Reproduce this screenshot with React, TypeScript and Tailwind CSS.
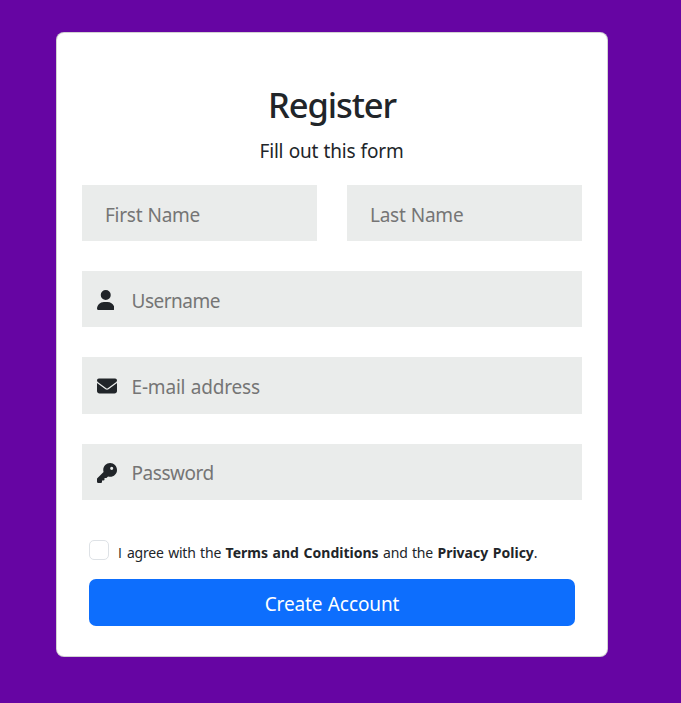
import React from "react";
import { FaUser, FaEnvelope, FaKey } from "react-icons/fa6";

type FieldProps = {
  placeholder: string;
  type?: string;
  icon?: React.ReactNode;
  className: string;
  textClass: string;
};

function Field({ placeholder, type = "text", icon, className, textClass }: FieldProps) {
  return (
    <label className={`flex items-center bg-[#eaeceb] ${className}`}>
      {icon && <span className="ml-[14.5px] flex w-[35px] shrink-0">{icon}</span>}
      <input
        type={type}
        placeholder={placeholder}
        className={`h-full w-full min-w-0 bg-transparent text-[19px] outline-none placeholder:text-[#757575] ${textClass}`}
      />
    </label>
  );
}

export default function App() {
  return (
    <main className="min-h-screen bg-[#6605a3] pt-8 pl-14 font-['Noto_Sans','Open_Sans',sans-serif] text-[#212529]">
      <form className="flex h-[625px] w-[552px] flex-col rounded-[8px] border border-black/[0.176] bg-white px-[25px] pt-[50px]">
        <h1 className="flex h-[44px] items-center justify-center text-[34.5px] font-medium whitespace-nowrap">
          <span className="tracking-[-1.1px]">Register</span>
        </h1>
        <p className="mt-[9px] flex h-[30px] items-center justify-center pr-px text-[19px]">
          <span className="tracking-[-0.2px] [word-spacing:0.6px]">Fill out this form</span>
        </p>
        <div className="mt-[19px] flex gap-[30px]">
          <Field placeholder="First Name" className="h-14 w-[235px] pl-[23px]" textClass="pt-[3px] tracking-[-0.25px] [word-spacing:0.5px]" />
          <Field placeholder="Last Name" className="h-14 w-[235px] pl-[23px]" textClass="pt-[3px] tracking-[-0.25px] [word-spacing:0.5px]" />
        </div>
        <Field placeholder="Username" icon={<FaUser className="mt-[2.5px] h-5 w-[17.5px]" />} className="mt-[30px] h-14" textClass="pt-[3px] tracking-[-0.5px]" />
        <Field placeholder="E-mail address" type="email" icon={<FaEnvelope className="mt-[1.5px] size-5" />} className="mt-[30px] h-[57px]" textClass="pt-[3px] tracking-[-0.18px] [word-spacing:0.6px]" />
        <Field placeholder="Password" type="password" icon={<FaKey className="mt-[1px] size-5" />} className="mt-[30px] h-14" textClass="pt-[1px] tracking-[-0.45px]" />
        <div className="mt-10 ml-[7px] flex h-[25px] items-start">
          <input
            type="checkbox"
            aria-label="Agree with the terms"
            className="size-5 shrink-0 appearance-none rounded-[5px] border border-[#dee2e6] bg-white"
          />
          <span className="ml-[9px] pt-[2px] text-[14px] leading-[21px] tracking-[-0.2px] whitespace-nowrap [word-spacing:1px]">
            <span className="mr-[0.8px] font-['Open_Sans']">I</span> agree with the <b className="tracking-[0px]">Terms and Conditions</b> and the{" "}
            <b className="tracking-[0px]">Privacy Policy</b>.
          </span>
        </div>
        <button
          type="button"
          className="mx-[7px] mt-[14px] flex h-[47px] shrink-0 items-center justify-center rounded-[7px] bg-[#0d6efd] pt-[4px] text-[19px] text-white"
        >
          <span className="tracking-[-0.1px] [word-spacing:0.5px]">Create Account</span>
        </button>
      </form>
    </main>
  );
}
